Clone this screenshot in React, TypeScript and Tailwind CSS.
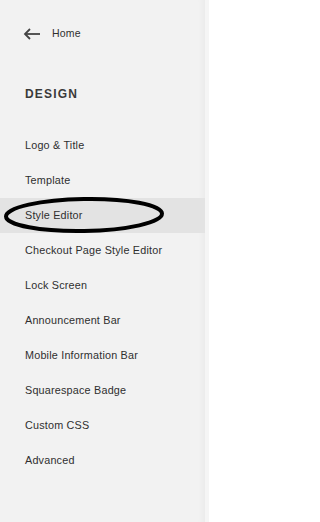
import React from "react"

const items = [
  "Logo & Title",
  "Template",
  "Style Editor",
  "Checkout Page Style Editor",
  "Lock Screen",
  "Announcement Bar",
  "Mobile Information Bar",
  "Squarespace Badge",
  "Custom CSS",
  "Advanced",
]

export default function App() {
  return (
    <div
      className="flex h-[522px] w-[209px] bg-[#f2f2f2] text-[#2f2f2f]"
      style={{ fontFamily: '"Liberation Sans", Arial, sans-serif' }}
    >
      <div className="w-[205px] shadow-[inset_-8px_0_8px_-8px_rgba(0,0,0,0.06)]">
        {/* back link */}
        <div className="flex h-[66px] items-center pl-[23px] pt-[1px]">
          <svg width="18" height="12" viewBox="0 0 18 12" fill="none" stroke="#444" strokeWidth="1.8">
            <path d="M17 6H2" />
            <path d="M7 1L2 6l5 5" />
          </svg>
          <span className="ml-[11px] text-[10.5px] tracking-[0.2px]">Home</span>
        </div>

        {/* section title */}
        <div className="pl-[25px] pt-[19px] text-[12px] font-bold tracking-[1.2px] text-[#3a3a3a]">DESIGN</div>

        <ul className="mt-[25px]">
          {items.map((label) => (
            <li
              key={label}
              className={
                "relative flex h-[35px] items-center pl-[25px] text-[10.8px] tracking-[0.2px] " +
                (label === "Style Editor" ? "bg-[#e3e3e3]" : "")
              }
            >
              {label}
              {label === "Style Editor" && (
                <svg
                  className="pointer-events-none absolute left-[2px] top-[-3px]"
                  width="166"
                  height="40"
                  viewBox="0 0 166 40"
                  fill="none"
                >
                  <ellipse
                    cx="82"
                    cy="20"
                    rx="78"
                    ry="16"
                    stroke="#000"
                    strokeWidth="4"
                    transform="rotate(-1 82 20)"
                  />
                </svg>
              )}
            </li>
          ))}
        </ul>
      </div>
      <div className="w-[4px] bg-[#f5f5f5]" />
    </div>
  )
}
